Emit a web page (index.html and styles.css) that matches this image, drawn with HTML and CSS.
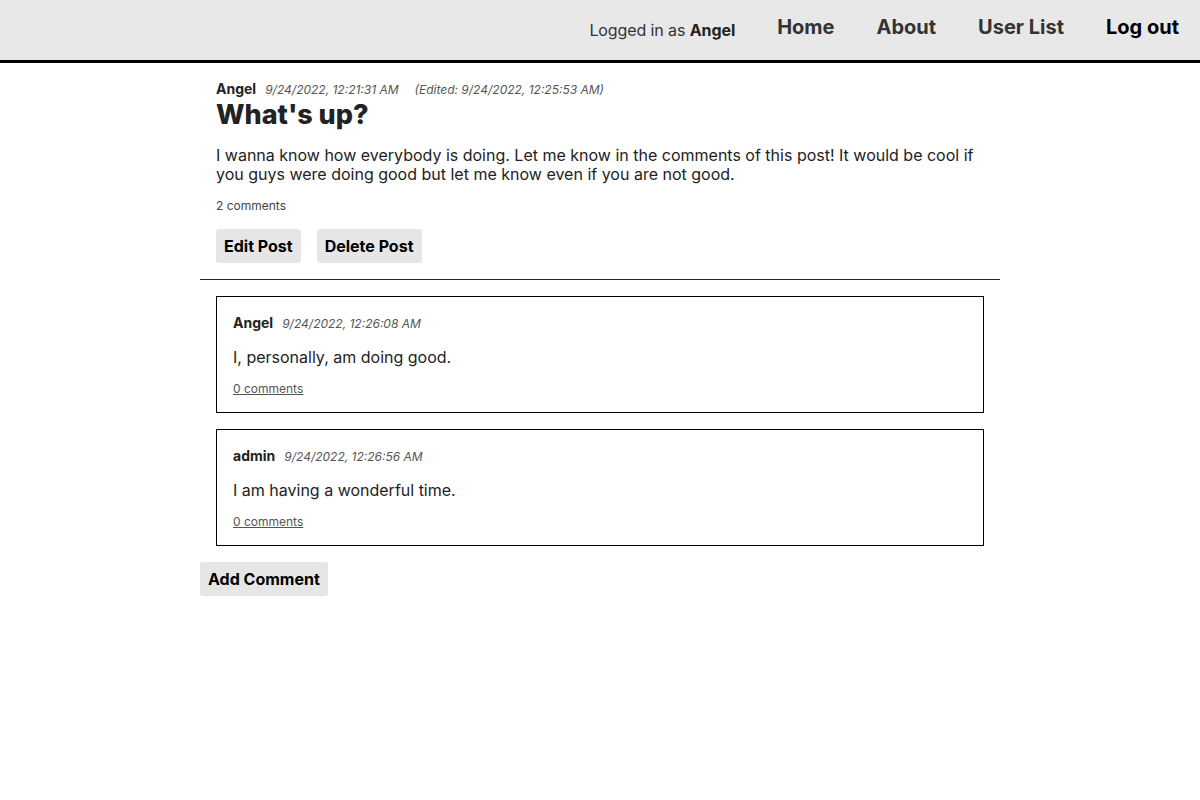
FILE: index.html
```html
<!DOCTYPE html>
<html lang="en">
<head>
<meta charset="utf-8">
<title>What's up?</title>
<link rel="stylesheet" href="styles.css">
</head>
<body>
<header class="topbar">
  <span class="login">Logged in as <strong>Angel</strong></span>
  <nav class="nav">
    <a class="nav-link" href="#">Home</a>
    <a class="nav-link" href="#">About</a>
    <a class="nav-link" href="#">User List</a>
    <a class="nav-link logout" href="#">Log out</a>
  </nav>
</header>
<main class="main">
  <article class="post">
    <div class="meta">
      <span class="author">Angel</span>
      <span class="date">9/24/2022, 12:21:31 AM</span>
      <span class="date edited">(Edited: 9/24/2022, 12:25:53 AM)</span>
    </div>
    <h1 class="title">What's up?</h1>
    <p class="body">I wanna know how everybody is doing. Let me know in the comments of this post! It would be cool if you guys were doing good but let me know even if you are not good.</p>
    <div class="count">2 comments</div>
    <div class="actions">
      <button class="btn">Edit Post</button>
      <button class="btn">Delete Post</button>
    </div>
  </article>
  <hr class="rule">
  <section class="comments">
    <div class="comment">
      <div class="meta">
        <span class="author">Angel</span>
        <span class="date">9/24/2022, 12:26:08 AM</span>
      </div>
      <p class="ctext">I, personally, am doing good.</p>
      <a class="clink" href="#">0 comments</a>
    </div>
    <div class="comment">
      <div class="meta">
        <span class="author">admin</span>
        <span class="date">9/24/2022, 12:26:56 AM</span>
      </div>
      <p class="ctext">I am having a wonderful time.</p>
      <a class="clink" href="#">0 comments</a>
    </div>
  </section>
  <button class="btn add">Add Comment</button>
</main>
</body>
</html>
```
FILE: styles.css
```css
* { box-sizing: border-box; }
body {
  margin: 0;
  font-family: Inter, "Noto Sans", sans-serif;
  color: #222;
  background: #fff;
}
.topbar {
  height: 63px;
  background: #e8e8e8;
  border-bottom: 3px solid #000;
  display: flex;
  justify-content: flex-end;
  align-items: flex-start;
  padding-right: 21px;
}
.login {
  font-size: 16px;
  color: #333;
  margin-top: 21px;
  line-height: 19px;
  letter-spacing: -0.1px;
}
.login strong { font-weight: 700; color: #222; }
.nav {
  display: flex;
  gap: 42px;
  margin-left: 42px;
  margin-top: 15px;
}
.nav-link {
  font-size: 20px;
  font-weight: 700;
  color: #333;
  text-decoration: none;
  line-height: 24px;
}
.nav-link.logout { color: #000; }
.main {
  width: 800px;
  margin: 0 auto;
  padding-top: 17px;
}
.post { padding: 0 16px 16px; }
.meta {
  display: flex;
  align-items: baseline;
  gap: 9px;
  line-height: 17px;
}
.author { font-size: 14px; font-weight: 700; color: #222; }
.date { font-size: 12px; font-style: italic; color: #555; }
.edited { margin-left: 7px; }
.title {
  margin: 0;
  font-size: 27px;
  font-weight: 800;
  line-height: 34px;
  color: #222;
}
.body {
  margin: 14px 0 0;
  font-size: 16px;
  line-height: 19px;
}
.count {
  margin-top: 14px;
  font-size: 12px;
  line-height: 15px;
  color: #444;
}
.actions {
  display: flex;
  gap: 16px;
  margin-top: 16px;
}
.btn {
  font-family: Inter, "Noto Sans", sans-serif;
  font-size: 16px;
  font-weight: 700;
  color: #000;
  background: #e6e6e6;
  border: none;
  border-radius: 3px;
  height: 34px;
  padding: 0 8px;
  line-height: 34px;
}
.rule {
  margin: 0;
  border: none;
  border-top: 1px solid #222;
}
.comments {
  display: flex;
  flex-direction: column;
  gap: 16px;
  padding: 16px 16px 0;
}
.comment {
  border: 1px solid #000;
  padding: 17px 16px 16px;
}
.comment .meta { gap: 9px; line-height: 18px; }
.ctext {
  margin: 15px 0 0;
  font-size: 16px;
  line-height: 19px;
}
.clink {
  display: block;
  margin-top: 14px;
  font-size: 12px;
  line-height: 15px;
  color: #555;
  text-decoration: underline;
}
.add { margin-top: 16px; }
```
